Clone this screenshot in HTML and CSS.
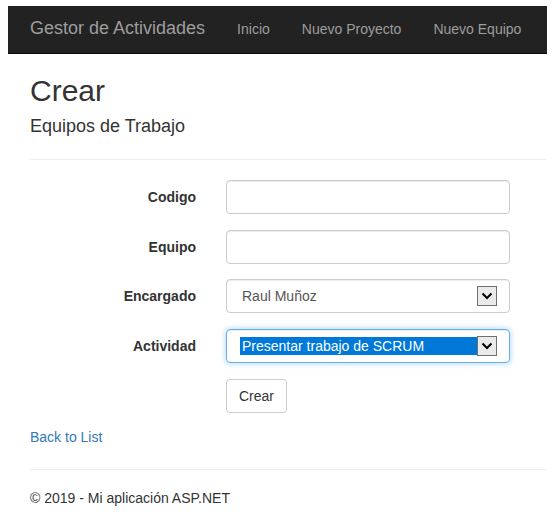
FILE: index.html
```html
<!DOCTYPE html>
<html lang="es">
<head>
<meta charset="utf-8">
<title>Crear - Gestor de Actividades</title>
<link rel="stylesheet" href="styles.css">
</head>
<body>
<div class="page">
  <nav class="navbar">
    <a class="brand" href="#">Gestor de Actividades</a>
    <a class="nav-link" href="#">Inicio</a>
    <a class="nav-link" href="#">Nuevo Proyecto</a>
    <a class="nav-link" href="#">Nuevo Equipo</a>
  </nav>
  <main class="content">
    <h2 class="title">Crear</h2>
    <h4 class="subtitle">Equipos de Trabajo</h4>
    <hr class="rule">
    <form class="form">
      <div class="row">
        <label class="label">Codigo</label>
        <div class="control"></div>
      </div>
      <div class="row">
        <label class="label">Equipo</label>
        <div class="control"></div>
      </div>
      <div class="row">
        <label class="label">Encargado</label>
        <div class="control select">
          <span class="select-text">Raul Muñoz</span>
          <span class="arrow"><svg width="12" height="8" viewBox="0 0 12 8"><path d="M1.5 1.5 L6 6 L10.5 1.5" fill="none" stroke="#000" stroke-width="2"/></svg></span>
        </div>
      </div>
      <div class="row">
        <label class="label">Actividad</label>
        <div class="control select focused">
          <span class="select-text selected">Presentar trabajo de SCRUM</span>
          <span class="arrow"><svg width="12" height="8" viewBox="0 0 12 8"><path d="M1.5 1.5 L6 6 L10.5 1.5" fill="none" stroke="#000" stroke-width="2"/></svg></span>
        </div>
      </div>
      <div class="row">
        <span class="label"></span>
        <button type="button" class="btn">Crear</button>
      </div>
    </form>
    <a class="back" href="#">Back to List</a>
    <hr class="rule rule-foot">
    <footer class="footer">© 2019 - Mi aplicación ASP.NET</footer>
  </main>
</div>
</body>
</html>
```
FILE: styles.css
```css
* { box-sizing: border-box; }
body {
  margin: 0;
  font-family: "Liberation Sans", Arial, sans-serif;
  font-size: 14px;
  line-height: 20px;
  color: #333;
  background: #fff;
}
.page {
  padding: 6px 8px 0 8px;
}
.navbar {
  display: flex;
  align-items: center;
  height: 48px;
  background: #222;
  border-bottom: 1px solid #080808;
  padding-left: 22px;
}
.brand {
  font-size: 18px;
  color: #9d9d9d;
  text-decoration: none;
  padding-right: 16px;
  margin-top: -4px;
}
.nav-link {
  color: #9d9d9d;
  text-decoration: none;
  padding: 0 16px;
  margin-top: -2px;
}
.content {
  padding-left: 22px;
}
.title {
  margin: 0;
  padding-top: 20px;
  font-size: 30px;
  font-weight: 400;
  line-height: 33px;
  color: #333;
}
.subtitle {
  margin: 9px 0 0 0;
  font-size: 18px;
  font-weight: 400;
  line-height: 20px;
  color: #333;
}
.rule {
  border: 0;
  border-top: 1px solid #eee;
  margin: 23px 0 0 0;
}
.form {
  margin-top: 20px;
}
.row {
  display: flex;
  align-items: center;
  min-height: 34px;
  margin-bottom: 16px;
}
.row:nth-child(3) {
  margin-top: -1px;
}
.row:last-child {
  margin-bottom: 0;
}
.label {
  width: 166px;
  text-align: right;
  font-weight: 700;
  margin-right: 30px;
}
.control {
  width: 284px;
  height: 34px;
  border: 1px solid #ccc;
  border-radius: 4px;
  background: #fff;
  box-shadow: inset 0 1px 1px rgba(0,0,0,0.075);
}
.select {
  display: flex;
  align-items: center;
  padding-left: 13px;
  padding-right: 12px;
}
.select-text {
  flex: 1;
  color: #555;
  padding-left: 2px;
  height: 18px;
  line-height: 18px;
}
.select-text.selected {
  background: #0078d7;
  color: #fff;
  padding-left: 2px;
}
.focused {
  border-color: #66afe9;
  box-shadow: inset 0 1px 1px rgba(0,0,0,0.075), 0 0 6px rgba(102,175,233,0.6);
}
.arrow {
  width: 20px;
  height: 20px;
  border: 1px solid #707070;
  background: #eaeaea;
  display: flex;
  align-items: center;
  justify-content: center;
}
.btn {
  font-family: inherit;
  font-size: 14px;
  color: #333;
  background: #fff;
  border: 1px solid #ccc;
  border-radius: 4px;
  height: 34px;
  padding: 6px 12px;
  line-height: 20px;
}
.back {
  display: block;
  margin-top: 14px;
  color: #337ab7;
  text-decoration: none;
}
.rule-foot {
  margin-top: 22px;
}
.footer {
  margin-top: 18px;
}
```
